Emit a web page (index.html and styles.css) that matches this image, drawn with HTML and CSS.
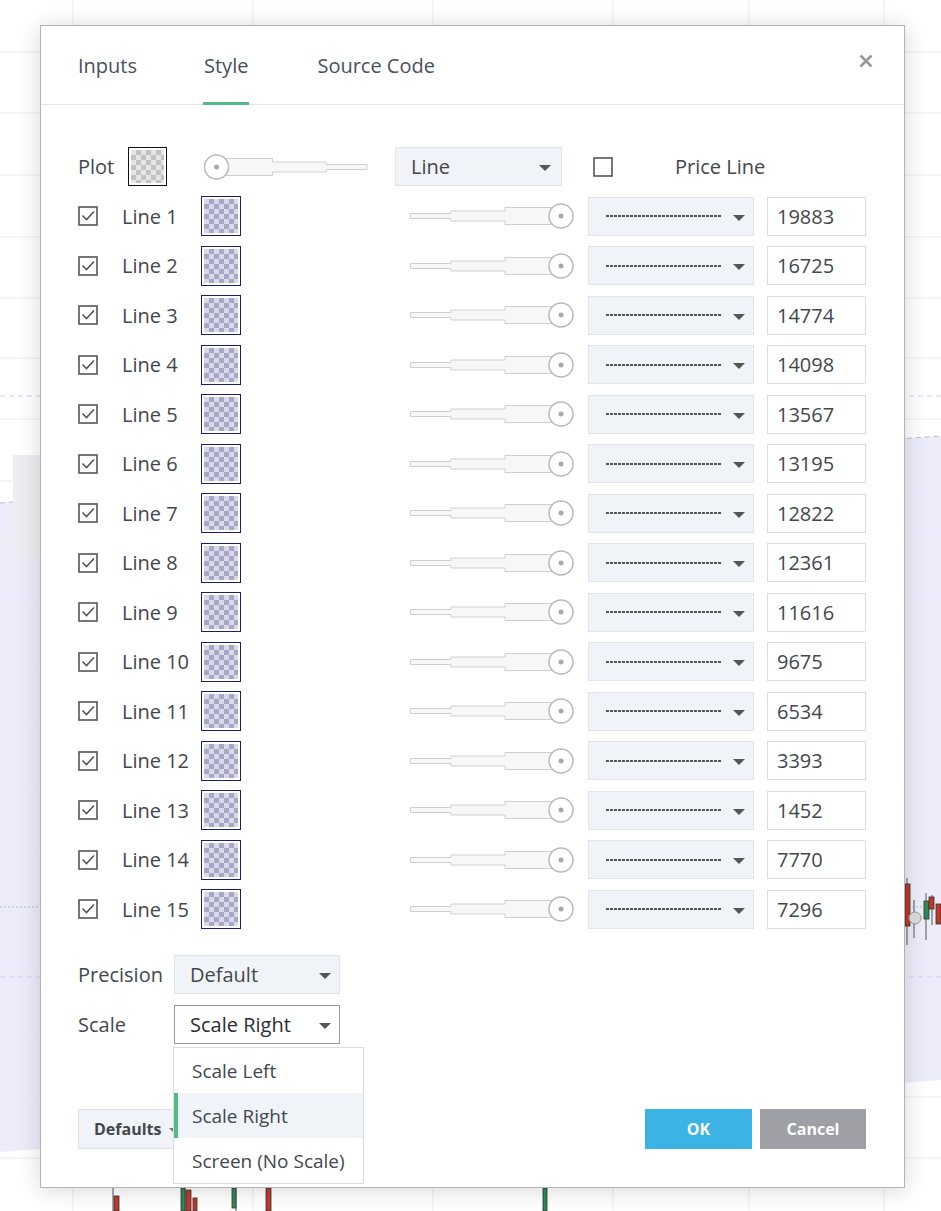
FILE: index.html
```html
<!DOCTYPE html>
<html lang="en">
<head>
    <meta charset="UTF-8">
    <title>Style</title>
    <link rel="stylesheet" href="styles.css">
</head>
<body>

<svg width="0" height="0" class="defs">
    <symbol id="slider" viewBox="0 0 164 26">
        <path d="M0.5 10.5 H41 V8 H95 V4.5 H142 V21.5 H95 V18 H41 V15.5 H0.5 Z" fill="#f7f7f7" stroke="#cfcfcf"/>
        <circle cx="151" cy="13" r="12" fill="#fff" stroke="#b9b9b9" stroke-width="1.5"/>
        <circle cx="151" cy="13" r="2.5" fill="#a9a9a9"/>
    </symbol>
    <symbol id="check" viewBox="0 0 20 20">
        <rect x="1" y="1" width="18" height="18" fill="#fff" stroke="#555" stroke-width="1.6"/>
        <path d="M4.5 9.5 L8.5 13.5 L16 5.5" fill="none" stroke="#555" stroke-width="1.6"/>
    </symbol>
    <symbol id="box" viewBox="0 0 20 20">
        <rect x="1" y="1" width="18" height="18" fill="#fff" stroke="#555" stroke-width="1.6"/>
    </symbol>
</svg>

<div class="chart">
    <svg class="chart-bg" width="941" height="1211" viewBox="0 0 941 1211">
        <rect width="941" height="1211" fill="#fff"/>
        <polygon points="0,503 941,436 941,1080 0,1152" fill="#ececfb"/>
        <g stroke="#ececec" stroke-width="1">
            <line x1="73" y1="0" x2="73" y2="1211"/>
            <line x1="253" y1="0" x2="253" y2="1211"/>
            <line x1="433" y1="0" x2="433" y2="1211"/>
            <line x1="613" y1="0" x2="613" y2="1211"/>
            <line x1="749" y1="0" x2="749" y2="1211"/>
            <line x1="884" y1="0" x2="884" y2="1211"/>
            <line x1="0" y1="52" x2="941" y2="52"/>
            <line x1="0" y1="113" x2="941" y2="113"/>
            <line x1="0" y1="175" x2="941" y2="175"/>
            <line x1="0" y1="237" x2="941" y2="237"/>
            <line x1="0" y1="298" x2="941" y2="298"/>
            <line x1="0" y1="358" x2="941" y2="358"/>
            <line x1="0" y1="419" x2="941" y2="419"/>
            <line x1="0" y1="481" x2="941" y2="481"/>
            <line x1="0" y1="542" x2="941" y2="542"/>
            <line x1="0" y1="604" x2="941" y2="604"/>
            <line x1="0" y1="666" x2="941" y2="666"/>
            <line x1="0" y1="727" x2="941" y2="727"/>
            <line x1="0" y1="789" x2="941" y2="789"/>
            <line x1="0" y1="850" x2="941" y2="850"/>
            <line x1="0" y1="912" x2="941" y2="912"/>
            <line x1="0" y1="973" x2="941" y2="973"/>
            <line x1="0" y1="1035" x2="941" y2="1035"/>
            <line x1="0" y1="1097" x2="941" y2="1097"/>
            <line x1="0" y1="1158" x2="941" y2="1158"/>
        </g>
        <g fill="none" stroke-dasharray="5 4">
            <line x1="0" y1="396" x2="941" y2="396" stroke="#cfcff3"/>
            <polyline points="0,503 941,436" stroke="#b9b9c9"/>
            <line x1="0" y1="977" x2="941" y2="977" stroke="#cfcff3"/>
            <line x1="0" y1="907" x2="941" y2="907" stroke="#9fc9c3" stroke-dasharray="2 2"/>
        </g>
        <rect x="13" y="455" width="40" height="104" fill="#eeeef2"/>
        <g stroke="#555" stroke-width="1">
            <line x1="907" y1="878" x2="907" y2="945"/>
            <line x1="914" y1="900" x2="914" y2="938"/>
            <line x1="926" y1="893" x2="926" y2="940"/>
            <line x1="932" y1="895" x2="932" y2="925"/>
            <line x1="113" y1="1188" x2="113" y2="1211"/>
            <line x1="185" y1="1188" x2="185" y2="1211"/>
            <line x1="236" y1="1188" x2="236" y2="1211"/>
            <line x1="545" y1="1188" x2="545" y2="1211"/>
        </g>
        <g stroke="#333" stroke-width="0.8">
            <rect x="905" y="884" width="5" height="42" fill="#c0392b"/>
            <rect x="924" y="901" width="5" height="18" fill="#2e8b57"/>
            <rect x="929" y="897" width="5" height="12" fill="#c0392b"/>
            <rect x="936" y="904" width="5" height="20" fill="#c0392b"/>
            <rect x="114" y="1196" width="5" height="15" fill="#c0392b"/>
            <rect x="181" y="1188" width="4" height="23" fill="#2e8b57"/>
            <rect x="186" y="1190" width="5" height="21" fill="#c0392b"/>
            <rect x="193" y="1198" width="4" height="13" fill="#c0392b"/>
            <rect x="232" y="1188" width="4" height="20" fill="#2e8b57"/>
            <rect x="266" y="1188" width="5" height="23" fill="#c0392b"/>
            <rect x="543" y="1188" width="4" height="23" fill="#2e8b57"/>
        </g>
        <circle cx="915" cy="918" r="6" fill="#ddd" stroke="#999"/>
    </svg>

    <div class="dialog">
        <div class="dialog-head">
            <div class="tabs">
                <span class="tab">Inputs</span>
                <span class="tab tab-active">Style</span>
                <span class="tab">Source Code</span>
            </div>
            <svg class="close" width="14" height="14" viewBox="0 0 14 14">
                <path d="M1.5 1.5 L12.5 12.5 M12.5 1.5 L1.5 12.5" stroke="#999" stroke-width="2.6"/>
            </svg>
        </div>

        <div class="dialog-body">
            <div class="row">
                <span class="plot-label">Plot</span>
                <span class="swatch swatch-plot"></span>
                <svg class="slider slider-flip"><use href="#slider"/></svg>
                <div class="select select-plot">Line</div>
                <svg class="checkbox price-box"><use href="#box"/></svg>
                <span class="price-label">Price Line</span>
            </div>

            <div class="row line-row">
                <svg class="checkbox"><use href="#check"/></svg>
                <span class="line-label">Line 1</span>
                <span class="swatch"></span>
                <svg class="slider"><use href="#slider"/></svg>
                <div class="select"><span class="dash"></span></div>
                <div class="num">19883</div>
            </div>
            <div class="row line-row">
                <svg class="checkbox"><use href="#check"/></svg>
                <span class="line-label">Line 2</span>
                <span class="swatch"></span>
                <svg class="slider"><use href="#slider"/></svg>
                <div class="select"><span class="dash"></span></div>
                <div class="num">16725</div>
            </div>
            <div class="row line-row">
                <svg class="checkbox"><use href="#check"/></svg>
                <span class="line-label">Line 3</span>
                <span class="swatch"></span>
                <svg class="slider"><use href="#slider"/></svg>
                <div class="select"><span class="dash"></span></div>
                <div class="num">14774</div>
            </div>
            <div class="row line-row">
                <svg class="checkbox"><use href="#check"/></svg>
                <span class="line-label">Line 4</span>
                <span class="swatch"></span>
                <svg class="slider"><use href="#slider"/></svg>
                <div class="select"><span class="dash"></span></div>
                <div class="num">14098</div>
            </div>
            <div class="row line-row">
                <svg class="checkbox"><use href="#check"/></svg>
                <span class="line-label">Line 5</span>
                <span class="swatch"></span>
                <svg class="slider"><use href="#slider"/></svg>
                <div class="select"><span class="dash"></span></div>
                <div class="num">13567</div>
            </div>
            <div class="row line-row">
                <svg class="checkbox"><use href="#check"/></svg>
                <span class="line-label">Line 6</span>
                <span class="swatch"></span>
                <svg class="slider"><use href="#slider"/></svg>
                <div class="select"><span class="dash"></span></div>
                <div class="num">13195</div>
            </div>
            <div class="row line-row">
                <svg class="checkbox"><use href="#check"/></svg>
                <span class="line-label">Line 7</span>
                <span class="swatch"></span>
                <svg class="slider"><use href="#slider"/></svg>
                <div class="select"><span class="dash"></span></div>
                <div class="num">12822</div>
            </div>
            <div class="row line-row">
                <svg class="checkbox"><use href="#check"/></svg>
                <span class="line-label">Line 8</span>
                <span class="swatch"></span>
                <svg class="slider"><use href="#slider"/></svg>
                <div class="select"><span class="dash"></span></div>
                <div class="num">12361</div>
            </div>
            <div class="row line-row">
                <svg class="checkbox"><use href="#check"/></svg>
                <span class="line-label">Line 9</span>
                <span class="swatch"></span>
                <svg class="slider"><use href="#slider"/></svg>
                <div class="select"><span class="dash"></span></div>
                <div class="num">11616</div>
            </div>
            <div class="row line-row">
                <svg class="checkbox"><use href="#check"/></svg>
                <span class="line-label">Line 10</span>
                <span class="swatch"></span>
                <svg class="slider"><use href="#slider"/></svg>
                <div class="select"><span class="dash"></span></div>
                <div class="num">9675</div>
            </div>
            <div class="row line-row">
                <svg class="checkbox"><use href="#check"/></svg>
                <span class="line-label">Line 11</span>
                <span class="swatch"></span>
                <svg class="slider"><use href="#slider"/></svg>
                <div class="select"><span class="dash"></span></div>
                <div class="num">6534</div>
            </div>
            <div class="row line-row">
                <svg class="checkbox"><use href="#check"/></svg>
                <span class="line-label">Line 12</span>
                <span class="swatch"></span>
                <svg class="slider"><use href="#slider"/></svg>
                <div class="select"><span class="dash"></span></div>
                <div class="num">3393</div>
            </div>
            <div class="row line-row">
                <svg class="checkbox"><use href="#check"/></svg>
                <span class="line-label">Line 13</span>
                <span class="swatch"></span>
                <svg class="slider"><use href="#slider"/></svg>
                <div class="select"><span class="dash"></span></div>
                <div class="num">1452</div>
            </div>
            <div class="row line-row">
                <svg class="checkbox"><use href="#check"/></svg>
                <span class="line-label">Line 14</span>
                <span class="swatch"></span>
                <svg class="slider"><use href="#slider"/></svg>
                <div class="select"><span class="dash"></span></div>
                <div class="num">7770</div>
            </div>
            <div class="row line-row">
                <svg class="checkbox"><use href="#check"/></svg>
                <span class="line-label">Line 15</span>
                <span class="swatch"></span>
                <svg class="slider"><use href="#slider"/></svg>
                <div class="select"><span class="dash"></span></div>
                <div class="num">7296</div>
            </div>

            <div class="row option-row">
                <span class="option-label">Precision</span>
                <div class="select select-option">Default</div>
            </div>
            <div class="row">
                <span class="option-label">Scale</span>
                <div class="select select-option select-open">Scale Right</div>
            </div>
        </div>

        <div class="dialog-foot">
            <button class="btn btn-defaults">Defaults</button>
            <div class="foot-right">
                <button class="btn btn-ok">OK</button>
                <button class="btn btn-cancel">Cancel</button>
            </div>
        </div>

        <ul class="menu">
            <li>Scale Left</li>
            <li class="menu-active">Scale Right</li>
            <li>Screen (No Scale)</li>
        </ul>
    </div>
</div>

</body>
</html>
```

FILE: styles.css
```css
body {
    margin: 0;
    font-family: "Open Sans", "Noto Sans", sans-serif;
    color: #43474e;
    background-color: #fff;
}

.defs {
    position: absolute;
}

.chart {
    position: relative;
    width: 941px;
    height: 1211px;
    overflow: hidden;
}

.chart-bg {
    display: block;
}

.dialog {
    position: absolute;
    left: 40px;
    top: 25px;
    width: 865px;
    height: 1163px;
    box-sizing: border-box;
    border: 1px solid #b3b3b3;
    background-color: #fff;
    box-shadow: 0 2px 22px rgba(0,0,0,0.16);
    display: flex;
    flex-direction: column;
}

.dialog-head {
    position: relative;
    height: 78px;
    border-bottom: 1px solid #e3e3e3;
    padding-left: 37px;
    display: flex;
}

.tabs {
    display: flex;
    gap: 68px;
}

.tab {
    position: relative;
    display: flex;
    align-items: center;
    font-size: 20px;
    color: #4a505b;
}

.tab-active {
    margin-left: -2px;
    padding: 0 1px;
}

.tab-active::after {
    content: "";
    position: absolute;
    left: 0;
    right: 0;
    bottom: -1px;
    height: 3px;
    background-color: #53b987;
}

.close {
    position: absolute;
    right: 31px;
    top: 28px;
}

.dialog-body {
    padding: 37px 37px 0 37px;
}

.row {
    height: 49.5px;
    display: flex;
    align-items: center;
    font-size: 20px;
}

.plot-label {
    width: 50px;
}

.swatch {
    width: 40px;
    height: 40px;
    box-sizing: border-box;
    border: 1px solid #1d1d78;
    padding: 2px;
    background: repeating-conic-gradient(#a7a7c6 0 25%, #d9d9ea 0 50%) 0 0 / 10px 10px content-box, #fff;
}

.swatch-plot {
    width: 39px;
    height: 39px;
    border-color: #111;
    background: repeating-conic-gradient(#c2c2c2 0 25%, #e6e6e6 0 50%) 0 0 / 10px 10px content-box, #fff;
}

.slider {
    width: 164px;
    height: 26px;
    margin-left: 169px;
}

.slider-flip {
    width: 165px;
    margin-left: 36px;
    transform: scaleX(-1);
}

.select {
    position: relative;
    width: 166px;
    height: 39px;
    box-sizing: border-box;
    margin-left: 14px;
    padding-left: 17px;
    border: 1px solid #e1e4e9;
    background-color: #f0f3f7;
    display: flex;
    align-items: center;
}

.select::after {
    content: "";
    position: absolute;
    right: 8px;
    top: 17px;
    border-left: 6px solid transparent;
    border-right: 6px solid transparent;
    border-top: 6px solid #555;
}

.select-plot {
    width: 167px;
    margin-left: 27px;
    padding-left: 15px;
}

.select-plot::after {
    right: 10px;
}

.dash {
    width: 116px;
    height: 2px;
    background: repeating-linear-gradient(to right, #555 0 3px, transparent 3px 4px);
}

.checkbox {
    width: 20px;
    height: 20px;
}

.price-box {
    margin-left: 31px;
}

.price-label {
    margin-left: 62px;
}

.line-label {
    width: 79px;
    margin-left: 24px;
}

.num {
    width: 99px;
    height: 39px;
    box-sizing: border-box;
    margin-left: 13px;
    padding-left: 9px;
    border: 1px solid #dcdcdc;
    display: flex;
    align-items: center;
}

.option-row {
    margin-top: 16px;
}

.option-label {
    width: 96px;
}

.select-option {
    margin-left: 0;
    padding-left: 15px;
}

.select-open {
    background-color: #fff;
    border-color: #9a9a9a;
    color: #2b2e33;
}

.dialog-foot {
    margin-top: auto;
    padding: 0 38px 38px 37px;
    display: flex;
    justify-content: space-between;
}

.foot-right {
    display: flex;
    gap: 8px;
}

.btn {
    height: 40px;
    border: none;
    font-family: inherit;
    font-size: 16px;
    font-weight: bold;
    color: #fff;
}

.btn-defaults {
    position: relative;
    width: 110px;
    text-align: left;
    padding-left: 15px;
    border: 1px solid #dde0e5;
    background-color: #f0f3f7;
    color: #43474e;
}

.btn-defaults::after {
    content: "";
    position: absolute;
    right: 8px;
    top: 18px;
    border-left: 5px solid transparent;
    border-right: 5px solid transparent;
    border-top: 5px solid #777;
}

.btn-ok {
    width: 107px;
    background-color: #3bb3e4;
}

.btn-cancel {
    width: 106px;
    background-color: #9ea0a5;
}

.menu {
    position: absolute;
    left: 132px;
    top: 1021px;
    width: 191px;
    margin: 0;
    padding: 0;
    list-style: none;
    box-sizing: border-box;
    border: 1px solid #dcdcdc;
    background-color: #fff;
    font-size: 19px;
}

.menu li {
    height: 45px;
    padding-left: 18px;
    display: flex;
    align-items: center;
}

.menu .menu-active {
    background-color: #f0f3f7;
    border-left: 4px solid #53b987;
    padding-left: 14px;
}
```
